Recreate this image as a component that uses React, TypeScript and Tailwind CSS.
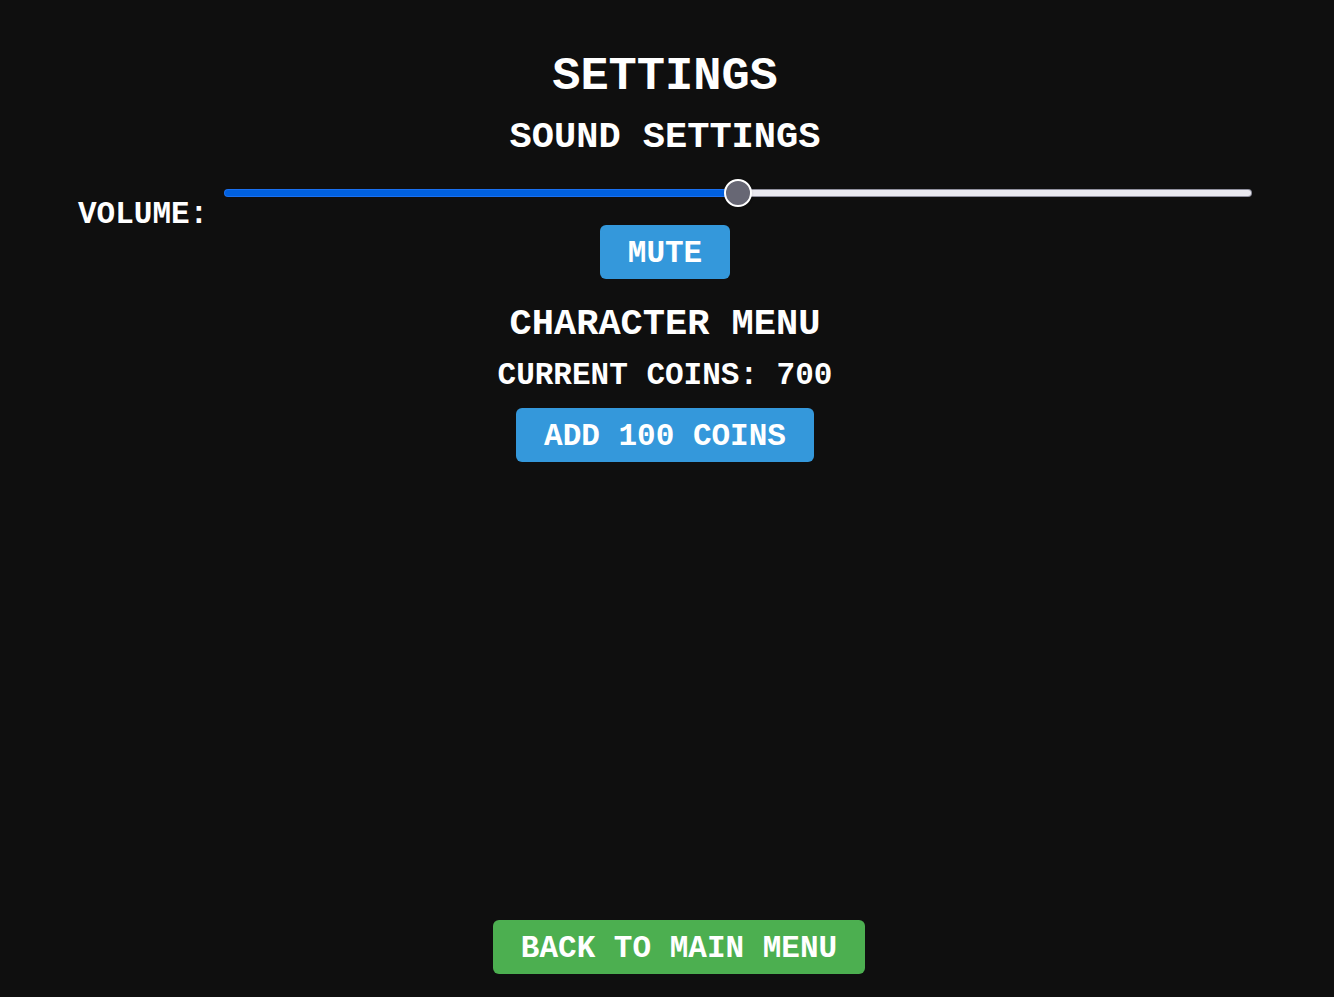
import { useState } from "react";
import type { CSSProperties } from "react";

const button =
  "rounded-md px-7 pt-1 h-[54px] text-[31px] leading-8 cursor-pointer uppercase font-bold whitespace-nowrap";

const slider =
  "block h-7 min-w-0 flex-1 cursor-pointer appearance-none bg-transparent " +
  "[&::-webkit-slider-runnable-track]:h-2 [&::-webkit-slider-runnable-track]:rounded-full " +
  "[&::-webkit-slider-runnable-track]:border [&::-webkit-slider-runnable-track]:border-transparent " +
  "[&::-webkit-slider-runnable-track]:[background:linear-gradient(to_right,#0060df_var(--fill),#eae9ef_var(--fill))_padding-box,linear-gradient(to_right,#1a70f0_var(--fill),#8f8f9d_var(--fill))_border-box] " +
  "[&::-webkit-slider-thumb]:appearance-none [&::-webkit-slider-thumb]:size-7 [&::-webkit-slider-thumb]:-mt-[11px] " +
  "[&::-webkit-slider-thumb]:rounded-full [&::-webkit-slider-thumb]:border-2 [&::-webkit-slider-thumb]:border-white " +
  "[&::-webkit-slider-thumb]:bg-[#676774] [&::-webkit-slider-thumb]:shadow";

export default function App() {
  const [volume, setVolume] = useState(50);
  const [muted, setMuted] = useState(false);
  const [coins, setCoins] = useState(700);

  return (
    <div className="flex min-h-screen flex-col bg-[#0f0f0f] pt-[53px] pb-[23px] font-['Liberation_Mono',monospace] font-bold text-white uppercase">
      <main className="flex flex-1 flex-col items-center pr-[82px] pl-[78px] text-center">
        <h1 className="text-[47px] leading-12">Settings</h1>
        <h2 className="mt-4 text-[37px] leading-10">Sound Settings</h2>
        <div className="mt-[22px] flex h-[46px] w-full items-start gap-4">
          <label htmlFor="volume" className="pt-5 text-[31px] leading-8">
            Volume:
          </label>
          <input
            id="volume"
            type="range"
            min={0}
            max={100}
            value={volume}
            onChange={(e) => setVolume(Number(e.target.value))}
            className={slider}
            style={{ "--fill": `${volume}%` } as CSSProperties}
          />
        </div>
        <button type="button" onClick={() => setMuted(!muted)} className={`${button} bg-[#3498db]`}>
          {muted ? "Unmute" : "Mute"}
        </button>
        <h2 className="mt-[25px] text-[37px] leading-10">Character Menu</h2>
        <p className="mt-4 text-[31px] leading-8">Current Coins: {coins}</p>
        <button type="button" onClick={() => setCoins(coins + 100)} className={`${button} mt-4 bg-[#3498db]`}>
          Add 100 Coins
        </button>
      </main>
      <footer className="flex justify-center pl-6">
        <button type="button" className={`${button} bg-[#4caf50]`}>
          Back to Main Menu
        </button>
      </footer>
    </div>
  );
}
